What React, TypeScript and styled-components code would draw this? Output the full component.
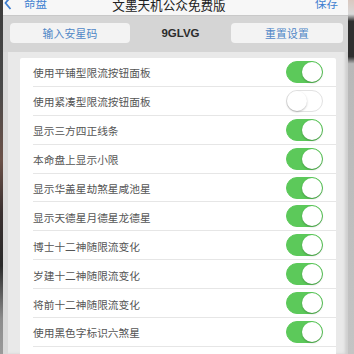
import React from "react";
import styled, { createGlobalStyle } from "styled-components";

const Global = createGlobalStyle`
  html, body { margin: 0; padding: 0; width: 354px; height: 354px; overflow: hidden; background: #bcbcbc; }
  body { font-family: "Noto Sans CJK SC", "Noto Sans", sans-serif; }
`;

const Page = styled.div`
  display: flex;
  width: 354px;
  height: 354px;
  overflow: hidden;
`;

const EdgeLeft = styled.div`
  width: 3px;
  flex: none;
  background: linear-gradient(#3c3c3c 0%, #4a4a4a 25%, #6b5148 45%, #3a3030 60%, #2a2a2a 75%, #8c8c8c 90%, #9a9a9a 100%);
`;

const EdgeRight = styled.div`
  flex: 1;
  background: linear-gradient(#d9c8c0 0%, #d9d9d9 4%, #2f2f2f 6%, #2f2f2f 16%, #b8b8b8 18%, #c4c4c4 100%);
`;

const Modal = styled.div`
  width: 345px;
  flex: none;
  display: flex;
  flex-direction: column;
  background: #e9e9e9;
  box-shadow: inset 5px 0 0 #dadada, inset -3px 0 3px #cfcfcf;
`;

const NavBar = styled.div`
  height: 16px;
  flex: none;
  box-sizing: border-box;
  background: #f7f7f7;
  border-bottom: 1px solid #c9c9c9;
  overflow: hidden;
`;

const NavRow = styled.div`
  height: 14px;
  margin-top: -4px;
  display: grid;
  grid-template-columns: 1fr auto 1fr;
  align-items: end;
  padding: 0 10px 0 1px;
`;

const NavSide = styled.div<{ $right?: boolean }>`
  display: flex;
  align-items: center;
  justify-content: ${(p) => (p.$right ? "flex-end" : "flex-start")};
  gap: 12px;
  color: #3f7fd0;
  font-size: 11.5px;
  line-height: 14px;
  margin-bottom: 2px;
`;

const NavTitle = styled.div`
  color: #222;
  font-size: 12.6px;
  line-height: 14px;
  padding-right: 4px;
`;

const Toolbar = styled.div`
  height: 36px;
  flex: none;
  display: grid;
  grid-template-columns: 120px 1fr 112px;
  align-items: start;
  padding: 7px 5px 0 7px;
  box-sizing: border-box;
  background: #d5d5d5;
`;

const ToolButton = styled.div`
  height: 20px;
  border-radius: 4px;
  background: #f3f3f3;
  color: #4f86c6;
  font-size: 10.8px;
  display: flex;
  align-items: center;
  justify-content: center;
  letter-spacing: 0.2px;
`;

const Code = styled.div`
  height: 20px;
  display: flex;
  align-items: center;
  justify-content: center;
  font-family: "Liberation Sans", Arial, sans-serif;
  font-weight: bold;
  font-size: 11.5px;
  color: #2c2c2c;
`;

const Content = styled.div`
  flex: 1;
  padding: 6px 12px 0 17px;
  overflow: hidden;
`;

const Card = styled.div`
  background: #ffffff;
  border-radius: 2px;
  padding-bottom: 20px;
`;

const Row = styled.div`
  height: 28.9px;
  box-sizing: border-box;
  margin-left: 13px;
  padding: 0 13px 0 0;
  display: flex;
  align-items: center;
  justify-content: space-between;
  border-bottom: 1px solid #e6e6e6;
`;

const Label = styled.span`
  font-size: 10.7px;
  color: #555;
  padding-top: 2px;
`;

const Toggle = styled.div<{ $on: boolean }>`
  position: relative;
  width: 37px;
  height: 22px;
  box-sizing: border-box;
  border-radius: 11px;
  background: ${(p) => (p.$on ? "#5cc95a" : "#ffffff")};
  border: 1px solid ${(p) => (p.$on ? "#5cc95a" : "#e2e2e2")};
`;

const Knob = styled.div<{ $on: boolean }>`
  position: absolute;
  top: 0;
  left: ${(p) => (p.$on ? "15px" : "0")};
  width: 20px;
  height: 20px;
  border-radius: 50%;
  background: #fff;
  box-shadow: 0 1px 2px rgba(0, 0, 0, 0.25);
`;

const items: [string, boolean][] = [
  ["使用平铺型限流按钮面板", true],
  ["使用紧凑型限流按钮面板", false],
  ["显示三方四正线条", true],
  ["本命盘上显示小限", true],
  ["显示华盖星劫煞星咸池星", true],
  ["显示天德星月德星龙德星", true],
  ["博士十二神随限流变化", true],
  ["岁建十二神随限流变化", true],
  ["将前十二神随限流变化", true],
  ["使用黑色字标识六煞星", true],
];

export default function App() {
  return (
    <>
      <Global />
      <Page>
        <EdgeLeft />
        <Modal>
          <NavBar>
            <NavRow>
              <NavSide>
                <svg width="8" height="14" viewBox="0 0 8 14">
                  <path d="M6.5 1 L1.5 7 L6.5 13" fill="none" stroke="#3f7fd0" strokeWidth="1.8" />
                </svg>
                <span>命盘</span>
              </NavSide>
              <NavTitle>文墨天机公众免费版</NavTitle>
              <NavSide $right>保存</NavSide>
            </NavRow>
          </NavBar>
          <Toolbar>
            <ToolButton>输入安星码</ToolButton>
            <Code>9GLVG</Code>
            <ToolButton>重置设置</ToolButton>
          </Toolbar>
          <Content>
            <Card>
              {items.map(([label, on]) => (
                <Row key={label}>
                  <Label>{label}</Label>
                  <Toggle $on={on}>
                    <Knob $on={on} />
                  </Toggle>
                </Row>
              ))}
            </Card>
          </Content>
        </Modal>
        <EdgeRight />
      </Page>
    </>
  );
}
